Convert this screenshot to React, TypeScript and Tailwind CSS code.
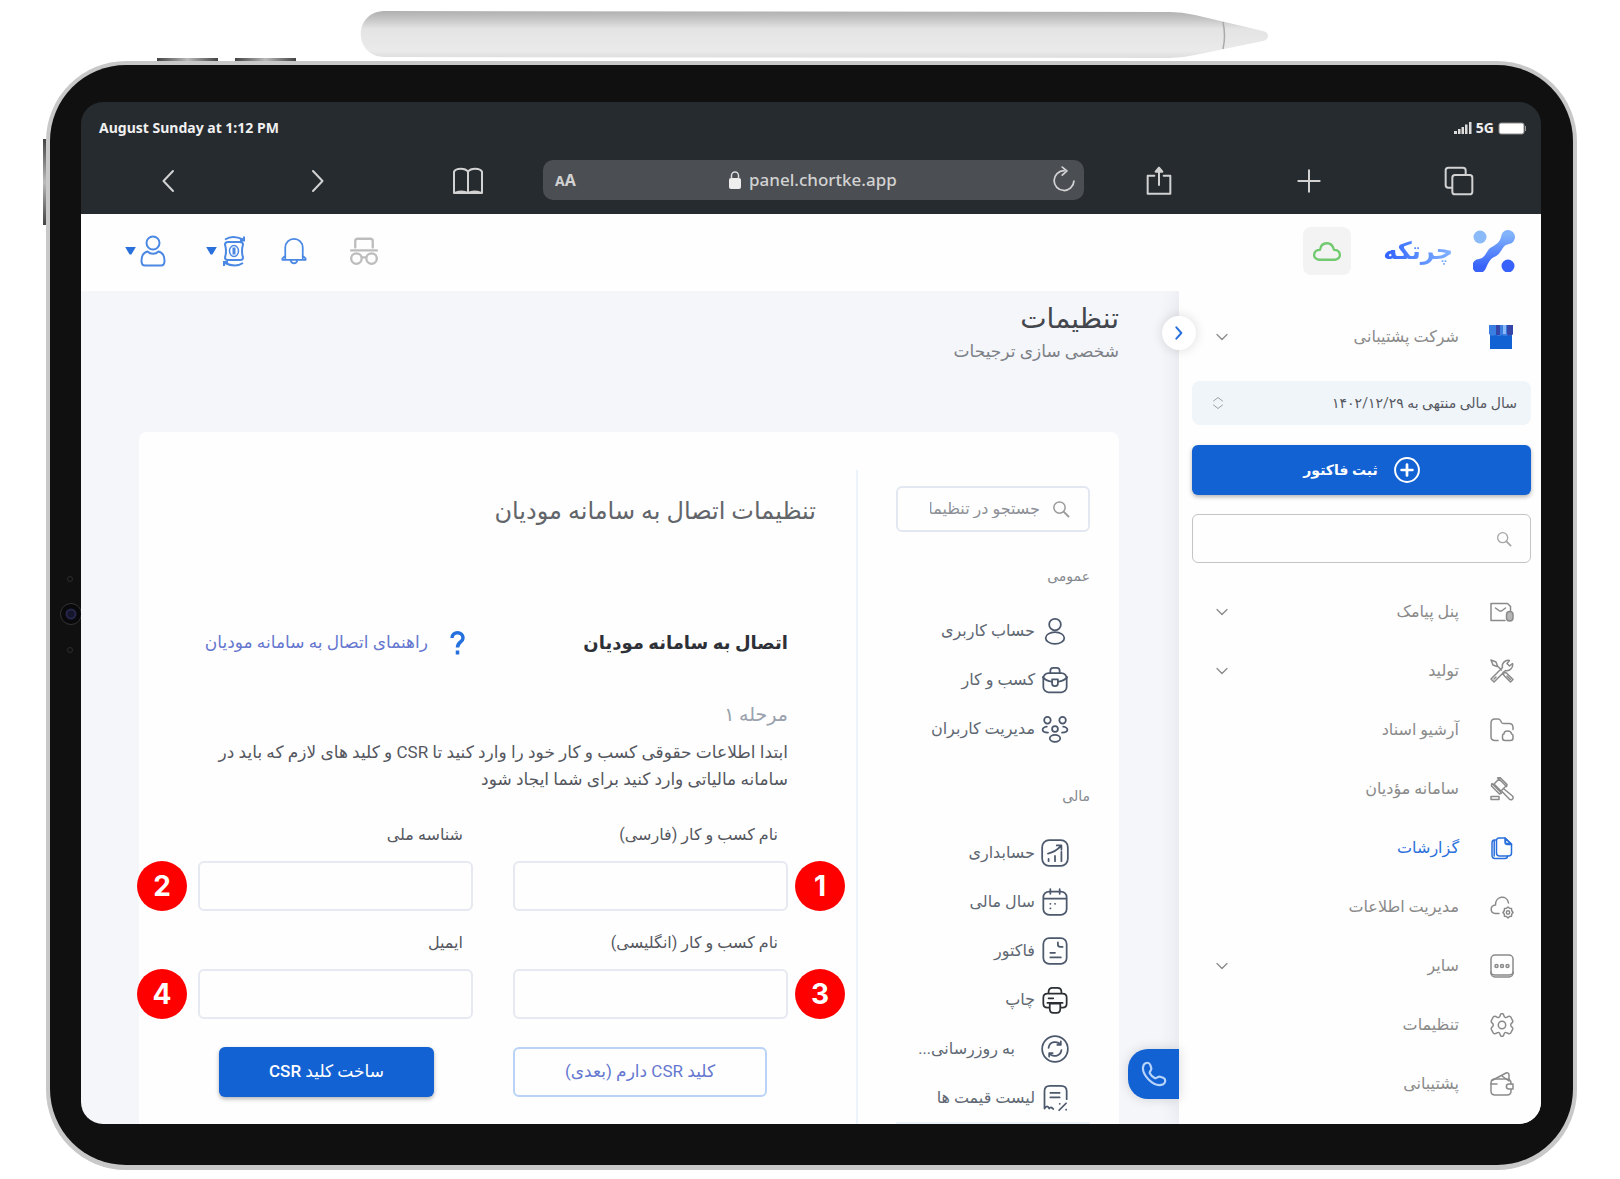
import type { ReactNode } from "react";

type IconProps = { className?: string; children?: ReactNode };

function Icon({ className = "size-6", children }: IconProps) {
  return (
    <svg viewBox="0 0 24 24" fill="none" stroke="currentColor" strokeWidth="1.5" strokeLinecap="round" strokeLinejoin="round" className={`shrink-0 ${className}`} aria-hidden="true">
      {children}
    </svg>
  );
}

function Chevron() {
  return <Icon className="mx-px size-3"><path d="M2 7l10 10L22 7" strokeWidth="2.500" /></Icon>;
}

function SearchIcon({ className }: { className?: string }) {
  return <Icon className={className}><circle cx="10" cy="10" r="7.500" strokeWidth="2" /><path d="M15.500 15.500L22 22" strokeWidth="2.500" /></Icon>;
}

const navItems = [
  {
    label: "پنل پیامک",
    expandable: true,
    icon: <><path d="M15 20.500H1V3.500H17.500l3 3v4" /><path d="M5.500 8l4 3h2l4-3" /><rect x="16.500" y="11.500" width="6.500" height="9.500" rx="3.200" fill="#b5b5b5" /></>,
  },
  {
    label: "تولید",
    expandable: true,
    icon: <><path d="M1 1l5 2 1.500 4 4 4M1 1l2 5 4 1.500M13.500 13l3 1L23 20.500 20.500 23 14 16.500l-1-3M1 20l11.500-11.500C11.500 4.500 15 0.500 19.500 1.500L17 4.500l2.500 2.500 3-2.500C23.500 9 19.500 12.500 15.500 11.500L4 23z" /><path d="M4 20l2-2M17 17l3.500 3.500" /></>,
  },
  {
    label: "آرشیو اسناد",
    icon: <><path d="M8 22.500H5c-2.500 0-4-1.500-4-4V5c0-2.500 1.500-4 4-4h3c1 0 2 .5 2.500 1.500l1 2c.4.700 1 1 2 1H19c2.500 0 4 1.500 4 4v2" /><path d="M12.500 18.500v-1c0-1 .6-1.500 1.500-1.500 0-4 7-4 7.500 0 1 .2 1.500.8 1.500 1.700v2.300c0 1.600-.9 2.500-2.500 2.500H15c-1.600 0-2.500-.9-2.500-2.500z" /></>,
  },
  {
    label: "سامانه مؤدیان",
    icon: <><path d="M9 2l7 7-5 5-7-7zM7.500 1L10 .500 17 7.500l-.5 2M1.500 8L2 6.500 11.500 16l-2 1-8-8z" /><path d="M14 12l8.500 7c1 1 .7 3-.5 3.500-1 .5-2 .3-2.700-.5L12 14.500M1 19.500h8v3H1zM1 22.500h8" /></>,
  },
  {
    label: "گزارشات",
    active: true,
    icon: <><path d="M9 2h6l6.500 6v9c0 1.800-1 3-3 3H9.500c-1.800 0-3-1-3-3V5c0-1.800.800-3 2.500-3z" /><path d="M15 2v4c0 1.500.8 2.500 2.500 2.500h4zM15.500 3v4.500h5" /><path d="M6 4H4.500C3 4 2 5 2 7v12c0 2 1 3.500 3 3.500h10c1.500 0 2.500-.800 2.500-2.500M4.200 5v15" /></>,
  },
  {
    label: "مدیریت اطلاعات",
    icon: <><path d="M9 18.500H5.500C-.5 18 0 10.500 5.500 10 5 1 17-1 18.500 8" /><path d="M18 12l1.500 1.300 2 .2.2 2L23 17.500l-1.300 1.700-.2 2-2 .300L18 23l-1.500-1.500-2-.3-.2-2L13 17.500l1.300-2 .2-2 2-.2z" /><circle cx="18" cy="17.500" r="1.700" /></>,
  },
  {
    label: "سایر",
    expandable: true,
    icon: <><rect x="1" y="1" width="22" height="22" rx="4" /><path d="M1 18c0 2 1.500 3 4 3h14c2.500 0 4-1 4-3" /><circle cx="6.500" cy="12" r="1.500" /><circle cx="12" cy="12" r="1.500" /><circle cx="17.500" cy="12" r="1.500" /></>,
  },
  {
    label: "تنظیمات",
    icon: <><path d="M10 2.800c.3-1.500.8-2.300 2-2.300s1.700.800 2 2.300c.4 1.700 1.500 2.200 3 1.300 1.500-1 2.500-1.300 3.500-.3s.9 1.900 1.900 3.400c.9 1.500.6 2-.7 3-1.300 1-1.300 2.600 0 3.600 1.300 1 1.600 1.500.7 3-1 1.500-.9 2.400-1.900 3.400s-2 .7-3.500-.3c-1.500-.9-2.600-.4-3 1.300-.3 1.500-.8 2.300-2 2.300s-1.700-.8-2-2.300c-.4-1.700-1.500-2.200-3-1.300-1.500 1-2.500 1.300-3.500.3s-.9-1.900-1.900-3.400c-.9-1.500-.6-2 .7-3 1.300-1 1.300-2.600 0-3.600-1.300-1-1.600-1.500-.7-3 1-1.500.9-2.400 1.900-3.400s2-.7 3.500.3c1.500.9 2.600.4 3-1.300z" /><circle cx="12" cy="12" r="3.700" /></>,
  },
  {
    label: "پشتیبانی",
    icon: <><path d="M1 11v8c0 2.500 1.200 4 4 4h12c2.800 0 4-1.500 4-4v-1.500M1 11c0-3 1.500-4 4-4h11c3 0 5 1 5 4v1" /><path d="M2 8.500L16 1c1.500-.7 3 .2 3 2v4M1 12h6M23 12v5h-4c-3.500 0-3.500-5 0-5zM12 4l7 5" /></>,
  },
];

const generalItems = [
  { label: "حساب کاربری", icon: <><circle cx="12" cy="6.500" r="5" /><ellipse cx="12" cy="18" rx="8" ry="5" /></> },
  { label: "کسب و کار", icon: <><rect x="2" y="6" width="20" height="16.500" rx="4.500" /><path d="M8 6V4c0-1.500.8-2.500 2.500-2.500h3C15.200 1.500 16 2.500 16 4v2M1.500 9.500c2 2.500 5 3.500 8 4M22.500 9.500c-2 2.500-5 3.500-8 4" /><path d="M9.500 11.500h5v3.500c0 3-5 3-5 0z" /></> },
  { label: "مدیریت کاربران", icon: <><circle cx="5.500" cy="4.500" r="2.800" /><circle cx="18.500" cy="4.500" r="2.800" /><circle cx="12" cy="12" r="2.500" /><ellipse cx="12" cy="20" rx="4.500" ry="3" /><path d="M5 10c-5 .5-5 5 1 5M19 10c5 .5 5 5-1 5" /></> },
];

const financeItems = [
  { label: "حسابداری", icon: <><rect x="1" y="1" width="22" height="22" rx="6" /><path d="M6.500 19v-2M12 19v-4.500M17.500 19v-8M6 12.500c4-.8 8-3 11.500-7M13.500 5.500h4v3.800" /></> },
  { label: "سال مالی", icon: <><rect x="2" y="3" width="20" height="20" rx="5" /><path d="M8 1v4M16 1v4M2.500 9h19M8 13.500h.1M8 17.500h.1M12 13.500h.1" /></> },
  { label: "فاکتور", icon: <><rect x="2" y="1" width="20" height="22" rx="5" /><path d="M14.500 4.500v2c0 1.200.8 2 2 2h2M8 13.500h4M8 17.500h9" /></> },
  { label: "چاپ", dark: true, icon: <><path d="M6.500 6.500V5c0-2.500 1-3.500 3.500-3.500h4c2.500 0 3.500 1 3.500 3.500v1.500zM7 18.500H5.500c-2 0-3.500-1.300-3.500-3.500v-5c0-2.200 1.300-3.500 3.500-3.500h13c2.200 0 3.500 1.300 3.500 3.500v5c0 2.200-1.300 3.500-3.500 3.500H17M5.500 14.500h13" /><path d="M7.500 15v4.500c0 2 1 3.500 3 3.500h3c2 0 3-1.500 3-3.500V15zM6.500 10.500h4" /></> },
  { label: "به روزرسانی...", wide: true, icon: <><circle cx="12" cy="12" r="11" /><path d="M6.500 11c.8-5.500 7.500-6.500 10.500-2.500M17 5.500v3h-3M17.500 13c-.8 5.500-7.500 6.500-10.500 2.500M7 18.500v-3h3" /></> },
  { label: "لیست قیمت ها", icon: <><path d="M3 21V6c0-3 1.500-4.500 4.500-4.500h9.500c3 0 5 1.500 5 4.500v7M3 21c1.500-2.500 3-2.500 4 0M7 21c1-1.500 2-1.500 3.500.5M8 7.500h8M8 11.500h8" /><path d="M15.500 22.500l6-6M16 17h.1M21.500 22h.1" /></> },
];

function SettingsList({ items }: { items: { label: string; icon: ReactNode; dark?: boolean; wide?: boolean }[] }) {
  return (
    <ul className="pr-[21px]">
      {items.map((item) => (
        <li key={item.label}>
          <a href="#" className={`flex h-[49px] items-center text-base text-[#5f6873] ${item.wide ? "gap-[26px]" : "gap-1.5"}`}>
            <Icon className={item.dark ? "size-7 text-[#2b2f33]" : "size-7 text-[#4c586c]"}>{item.icon}</Icon>
            <span className="whitespace-nowrap">{item.label}</span>
          </a>
        </li>
      ))}
    </ul>
  );
}

function Pencil() {
  return (
    <svg viewBox="0 0 908 49" className="ml-[360px] mt-2.5 h-[49px] w-[908px]" aria-hidden="true">
      <defs>
        <linearGradient id="body" x1="0" y1="0" x2="0" y2="1">
          <stop offset="0" stopColor="#b0b0b0" />
          <stop offset="0.15" stopColor="#c2c2c2" />
          <stop offset="0.38" stopColor="#e4e4e4" />
          <stop offset="0.85" stopColor="#eaeaea" />
          <stop offset="1" stopColor="#dedede" />
        </linearGradient>
      </defs>
      <path d="M24 1L810 2Q822 2 835 5L903 21Q908 22 908 26T903 31L835 45Q822 48 810 48L24 47C-7 46-7 2 24 1z" fill="url(#body)" />
      <path d="M863 12q3 14 0 27" fill="none" stroke="#aaa" strokeWidth="1.500" />
    </svg>
  );
}

function BrowserBar() {
  return (
    <div dir="ltr" className="bg-[#262b2f] font-['Noto_Sans',sans-serif] text-white">
      <div className="flex h-[52px] items-center justify-between pl-[18px] pr-3.5 text-sm font-bold text-[#f0f0f0]">
        <span>August Sunday at 1:12 PM</span>
        <span className="flex items-center gap-1">
          <svg viewBox="0 0 18 12" className="h-3 w-[18px]" fill="#dcdcdc" aria-hidden="true">
            <path d="M0 9h3v3H0zM4 7h2.500v5H4zM7.500 5H10v7H7.500zM11 2.500h2.500V12H11zM15 0h2.500v12H15z" />
          </svg>
          5G
          <svg viewBox="0 0 29 13" className="h-[13px] w-[29px]" aria-hidden="true">
            <rect x="1" y="1" width="25" height="11" rx="2" fill="#fff" stroke="#888" />
            <path d="M27.500 4v5" stroke="#999" />
          </svg>
        </span>
      </div>
      <div className="flex h-[60px] items-start pl-3 pr-[7px] text-[#d2d2d2]">
        <button type="button" aria-label="Back" className="grid h-[54px] w-[150px] place-items-center"><Icon className="size-6"><path d="M17 2L7.500 12 17 22" strokeWidth="2" /></Icon></button>
        <button type="button" aria-label="Forward" className="grid h-[54px] w-[150px] place-items-center"><Icon className="size-6"><path d="M7 2l9.500 10L7 22" strokeWidth="2" /></Icon></button>
        <button type="button" aria-label="Bookmarks" className="grid h-[54px] w-[150px] place-items-center">
          <Icon className="size-8"><path d="M12 5v16M12 5C10 2 3 2 1.500 5v16h21V5C21 2 14 2 12 5M2 21c4-1.500 8-1 10 0 2-1 6-1.500 10 0" /></Icon>
        </button>
        <div className="mt-1.5 flex h-10 min-w-0 flex-1 items-center rounded-[10px] bg-[#4b4e53] pl-3 pr-1.5">
          <button type="button" className="text-base font-bold"><span className="text-sm">A</span>A</button>
          <span className="flex flex-1 items-center justify-center gap-2">
            <svg viewBox="0 0 12 18" className="h-[18px] w-3" aria-hidden="true"><rect y="7" width="12" height="11" rx="2" fill="#eee" /><path d="M2.500 8V4.500a3.500 3.500 0 0 1 7 0V8" fill="none" stroke="#ddd" strokeWidth="1.500" /></svg>
            <span className="text-[17px] font-medium">panel.chortke.app</span>
          </span>
          <button type="button" aria-label="Reload" className="grid size-7 place-items-center"><Icon className="size-7"><path d="M12 4a8.500 8.500 0 1 0 8.500 9M10.500 1l4 3.200-4 3.600" /></Icon></button>
        </div>
        <button type="button" aria-label="Share" className="grid h-[54px] w-[150px] place-items-center"><Icon className="size-8"><path d="M8.500 8H3.500v13.500h17V8h-5M12 15V2.500M9.500 5L12 2l2.500 3z" /></Icon></button>
        <button type="button" aria-label="New tab" className="grid h-[54px] w-[150px] place-items-center"><Icon className="size-8"><path d="M12 4v16M4 12h16" /></Icon></button>
        <button type="button" aria-label="Tabs" className="grid h-[54px] w-[150px] place-items-center"><Icon className="size-8"><rect x="7" y="7.500" width="15" height="14.500" rx="2" /><path d="M6.500 17H4a2 2 0 0 1-2-2V4a2 2 0 0 1 2-2h11a2 2 0 0 1 2 2v3" /></Icon></button>
      </div>
    </div>
  );
}

function Caret() {
  return <svg viewBox="0 0 12 9" className="h-2 w-[11px]" fill="#2a70dc" aria-hidden="true"><path d="M0 0h12L7 8.500H5z" /></svg>;
}

function AppHeader() {
  return (
    <header dir="ltr" className="relative z-20 flex h-[77px] items-center justify-between bg-[#fefefe] pb-1 pl-11 pr-[26px] text-[#4a88e4]">
      <div className="flex items-center">
        <button type="button" aria-label="Account" className="flex items-center gap-1">
          <Caret />
          <svg viewBox="0 0 26 32" className="h-8 w-[26px]" fill="none" stroke="currentColor" strokeWidth="2" aria-hidden="true"><circle cx="13" cy="8" r="6.500" /><path d="M7.500 16.500C3 17.500 1.500 21 1.500 26c0 3 1 4.500 3.500 4.500h16c2.500 0 3.500-1.500 3.500-4.500 0-5-1.500-8.500-6-9.500-3 3-8 3-11 0z" /></svg>
        </button>
        <button type="button" aria-label="Currency" className="ml-10 flex items-center gap-1.5">
          <Caret />
          <svg viewBox="0 0 22 32" className="h-8 w-[22px]" fill="none" stroke="currentColor" strokeWidth="2" aria-hidden="true"><path d="M5 7h12c1.500 0 3 1 3 2.500-1.500 5-1.500 8 0 13 0 1.500-1.500 2.500-3 2.500H5c-1.500 0-3-1-3-2.500 1.500-5 1.500-8 0-13C2 8 3.500 7 5 7zM2 4.500c6-4 12-3 18 0M21 1.500v4h-4M20 28c-6 4-12 3-18 0M1 31v-4h4" /><ellipse cx="11" cy="16" rx="4.500" ry="5.500" strokeWidth="1.500" /><path d="M11 12.500v7" strokeWidth="3" /></svg>
        </button>
        <button type="button" aria-label="Notifications" className="ml-[35px]">
          <Icon className="size-7"><path d="M4.500 18.500V9a7.500 7.500 0 0 1 15 0v9.500M4.500 16L2 18.500v1h20v-1L19.500 16M9 20c1 3.500 5 3.500 6 0" /></Icon>
        </button>
        <button type="button" aria-label="Incognito" className="ml-[42px] text-[#bdbdbd]">
          <Icon className="size-7"><path d="M4.500 9V3.500a2 2 0 0 1 2-2h11a2 2 0 0 1 2 2V9M1 11.500h22M10.500 17.500h3" strokeWidth="2" /><circle cx="5.500" cy="18.500" r="4.500" strokeWidth="2" /><circle cx="18.500" cy="18.500" r="4.500" strokeWidth="2" /></Icon>
        </button>
      </div>
      <div className="flex items-center">
        <button type="button" aria-label="Sync" className="grid size-12 place-items-center rounded-lg bg-[#f3f3f3] text-[#72ca70]">
          <Icon className="size-7"><path d="M5 19.500C-1 18.500 0 11 6 11c1-7 10-8 12 0 6 0 7 7.500 1 8.500z" strokeWidth="2" /></Icon>
        </button>
        <span dir="rtl" className="ml-8 bg-linear-to-l from-[#84b2ff] to-[#315fff] bg-clip-text font-['DejaVu_Sans',sans-serif] text-2xl font-bold leading-[48px] text-transparent">چرتکه</span>
        <svg viewBox="0 0 42 42" className="ml-5 size-[42px]" aria-hidden="true">
          <defs>
            <linearGradient id="mark" x1="0" y1="1" x2="0" y2="0"><stop offset="0.15" stopColor="#3763fb" /><stop offset="0.9" stopColor="#82b4fb" /></linearGradient>
          </defs>
          <path d="M13 38a7 7 0 1 1-7-9c5-1 6-4 8-7 2-4 5-5 8-7 3-2 5-4 6-8a7 7 0 1 1 8 7c-5 1-6 4-8 7-2 3-4 5-7 6-4 2-6 6-8 11z" fill="url(#mark)" />
          <circle cx="7" cy="7" r="6.500" fill="#8bbaf8" />
          <circle cx="35" cy="36" r="6.500" fill="#3763fb" />
        </svg>
      </div>
    </header>
  );
}

function Sidebar() {
  return (
    <aside className="relative z-10 w-[362px] shrink-0 bg-[#fefefe] pb-[11px] pl-[13px] pr-2.5 pt-[23px] shadow-[-4px_0_16px_rgba(60,60,80,0.08)]">
      <button type="button" aria-label="Collapse menu" className="absolute -left-[17px] top-[25px] grid size-[34px] place-items-center rounded-full bg-white text-[#2a70dc] shadow-[0_0_12px_rgba(0,0,0,0.14)]">
        <Icon className="size-4"><path d="M8 3.500l7.500 8.500L8 20.500" strokeWidth="3" /></Icon>
      </button>
      <button type="button" className="flex h-[46px] w-full items-center pl-[23px] pr-[18px] text-base text-[#8a8a8a]">
        <svg viewBox="0 0 24 24" className="size-6" aria-hidden="true"><path d="M1 8h22v16H1z" fill="#1262d4" /><path d="M0 0h24v9q-2 3-5 1-3 2-6 0-3 2-6 0-5 2-7-1z" fill="#3b7ee2" /><path d="M7 0h4v10H7zM18 0h6v9q-3 3-6 0z" fill="#3646a8" /><path d="M14 0h3v9h-3z" fill="#8ab8f8" /></svg>
        <span className="mr-[30px] flex-1 text-right">شرکت پشتیبانی</span>
        <Chevron />
      </button>
      <button type="button" className="mt-[21px] flex h-11 w-full items-center justify-between rounded-lg bg-[#f0f5f9] pl-5 pr-[14px] text-sm text-[#55575f]">
        <span>سال مالی منتهی به ۱۴۰۲/۱۲/۲۹</span>
        <Icon className="h-[18px] w-3 text-[#98a0a6]"><path d="M3 8l9-7 9 7M3 16l9 7 9-7" strokeWidth="2" /></Icon>
      </button>
      <button type="button" className="mt-5 flex h-[50px] w-full items-center justify-center gap-4 rounded-md bg-[#1262d4] text-sm font-bold text-white shadow-[0_2px_4px_rgba(0,0,0,0.3)]">
        <Icon className="size-[26px]"><circle cx="12" cy="12" r="11" strokeWidth="1.800" /><path d="M12 7v10M7 12h10" strokeWidth="2.500" /></Icon>
        ثبت فاکتور
      </button>
      <div className="mt-[19px] flex h-[49px] items-center gap-2 rounded-md border border-[#c4c4c4] px-[18px] text-[#a5a5a5]">
        <SearchIcon className="size-4" />
        <input type="text" aria-label="جستجو" className="min-w-0 flex-1 outline-none" />
      </div>
      <nav className="mt-[19px]">
        {navItems.map((item) => (
          <a key={item.label} href="#" className={`flex h-[59px] items-center pl-[23px] pr-[17px] text-base ${item.active ? "text-[#2a70dc]" : "text-[#8a8a8a]"}`}>
            <Icon>{item.icon}</Icon>
            <span className="mr-[31px] flex-1 whitespace-nowrap">{item.label}</span>
            {item.expandable && <Chevron />}
          </a>
        ))}
      </nav>
    </aside>
  );
}

function Badge({ n, side }: { n: number; side: "left" | "right" }) {
  return (
    <span className={`absolute bottom-0 grid size-[50px] place-items-center rounded-full bg-[#fe0000] font-['Inter',sans-serif] text-[28px] font-bold text-white ${side === "right" ? "-right-[57px]" : "-left-[61px]"}`}>{n}</span>
  );
}

const fields = [
  { id: "name-fa", label: "نام کسب و کار (فارسی)", n: 1 },
  { id: "national-id", label: "شناسه ملی", n: 2 },
  { id: "name-en", label: "نام کسب و کار (انگلیسی)", n: 3 },
  { id: "email", label: "ایمیل", n: 4 },
];

function ConnectionForm() {
  return (
    <form className="min-w-0 flex-1 pt-[25px]">
      <h2 className="pr-10 text-2xl leading-8 text-[#62656a]">تنظیمات اتصال به سامانه مودیان</h2>
      <div className="pl-[59px] pr-[68px]">
        <div className="mt-[100px] grid grid-cols-2 items-center gap-x-10">
          <h3 className="whitespace-nowrap text-lg font-bold leading-8 text-[#2d3036]">اتصال به سامانه مودیان</h3>
          <a href="#" className="flex items-center gap-[22px] pr-2 text-[17px] text-[#6577cf]">
            <svg viewBox="0 0 15 24" className="h-6 w-[15px] shrink-0" fill="none" stroke="#2470dc" strokeWidth="3.500" aria-hidden="true"><path d="M2 7c0-7 11-7 11 0 0 4-5.500 4-5.500 9.500M7.500 19.500v4" /></svg>
            <span className="whitespace-nowrap">راهنمای اتصال به سامانه مودیان</span>
          </a>
        </div>
        <p className="mt-[42px] text-[19px] leading-7 text-[#9aa1ad]">مرحله ۱</p>
        <p className="mt-2.5 whitespace-nowrap text-[17px] leading-[27px] text-[#55575f]">
          ابتدا اطلاعات حقوقی کسب و کار خود را وارد کنید تا CSR و کلید های لازم که باید در
          <br />
          سامانه مالیاتی وارد کنید برای شما ایجاد شود
        </p>
        <div className="mt-[30px] grid grid-cols-2 gap-x-10 gap-y-5">
          {fields.map((field) => (
            <div key={field.id} className="relative">
              <label htmlFor={field.id} className="block pr-2.5 text-base leading-6 text-[#55575f]">{field.label}</label>
              <input id={field.id} className="mt-3.5 block h-[50px] w-full rounded-md border-2 border-[#e6e9f1] px-3 outline-none" />
              <Badge n={field.n} side={field.n % 2 ? "right" : "left"} />
            </div>
          ))}
        </div>
        <div className="mt-7 grid grid-cols-2 gap-x-10">
          <button type="button" className="mr-[21px] h-[50px] rounded-md border-2 border-[#b9d2f6] text-[17px] text-[#6577cf]">کلید CSR دارم (بعدی)</button>
          <button type="submit" className="ml-[21px] mr-[39px] h-[50px] rounded-md bg-[#1262d4] text-[17px] font-medium text-white shadow-[0_2px_4px_rgba(0,0,0,0.3)]">ساخت کلید CSR</button>
        </div>
      </div>
    </form>
  );
}

function SettingsPage() {
  return (
    <main className="relative z-20 flex min-w-0 flex-1 flex-col pl-[58px] pr-[60px] pt-2.5">
      <h1 className="text-[28px] leading-9 text-[#43464c]">تنظیمات</h1>
      <p className="text-[17px] leading-7 text-[#7d8087]">شخصی سازی ترجیحات</p>
      <div className="mt-[67px] flex flex-1 rounded-t-lg bg-[#fefefe] pt-[38px]">
        <div className="w-[263px] shrink-0 border-l-2 border-[#edf3fa] pl-[38px] pr-[29px] pt-4">
          <div className="flex h-[46px] items-center gap-3 rounded-md border-2 border-[#e2e7f1] pl-8 pr-[18px] text-[#9b9b9b]">
            <SearchIcon className="size-[18px]" />
            <input type="text" aria-label="جستجو در تنظیمات" placeholder="جستجو در تنظیمات" className="min-w-0 flex-1 text-base outline-none placeholder:text-[#8d9096]" />
          </div>
          <h2 className="mt-8 text-sm leading-6 text-[#85888e]">عمومی</h2>
          <div className="mt-[18px]"><SettingsList items={generalItems} /></div>
          <h2 className="mt-[31px] text-sm leading-6 text-[#85888e]">مالی</h2>
          <div className="mt-5 border-b-2 border-[#edf3fa]"><SettingsList items={financeItems} /></div>
        </div>
        <ConnectionForm />
      </div>
      <button type="button" aria-label="تماس" className="absolute bottom-[25px] right-0 grid h-[50px] w-[51px] place-items-center rounded-l-[20px] bg-[#1262d4] text-[#b9d4fb] shadow-[0_0_12px_rgba(0,0,0,0.15)]">
        <Icon className="size-[26px]"><path d="M2.500 3.500c2-2.500 5-2.500 6 0l1 3c.5 1.700-1.500 2.700-1.500 4.500 1 2 3 4 5 5 1.800 0 2.800-2 4.500-1.500l3 1c2.500 1 2.500 4 0 6C12 25-1 12 2.500 3.500z" strokeWidth="2" /></Icon>
      </button>
    </main>
  );
}

export default function App() {
  return (
    <div className="min-h-screen bg-white pb-[9px]">
      <div className="flow-root"><Pencil /></div>
      <div className="relative ml-[46px] mr-[43px] mt-0.5 rounded-[80px] bg-[#c9c8c8] pb-[5px] pl-1 pr-1 pt-1">
        <span className="absolute -top-[3px] left-[111px] h-[3px] w-[61px] bg-linear-to-r from-[#444] via-[#bbb] to-[#444]" />
        <span className="absolute -top-[3px] left-[189px] h-[3px] w-[61px] bg-linear-to-r from-[#444] via-[#bbb] to-[#444]" />
        <span className="absolute -left-[3px] top-[78px] h-[86px] w-[3px] bg-linear-to-b from-[#444] via-[#bbb] to-[#444]" />
        <div className="relative rounded-[76px] bg-[#101010] pb-[41px] pl-[31px] pr-8 pt-[37px]">
          <svg viewBox="0 0 24 84" className="absolute left-2.5 top-[506px] h-[84px] w-6" fill="none" aria-hidden="true">
            <circle cx="10" cy="8" r="2.500" stroke="#2c2c2c" />
            <circle cx="11" cy="43" r="10.500" fill="#09090b" stroke="#333" />
            <circle cx="11" cy="43" r="4.500" fill="#15152c" stroke="#26264a" strokeWidth="2" />
            <circle cx="10" cy="79" r="2.500" stroke="#2c2c2c" />
          </svg>
          <div className="relative overflow-hidden rounded-[22px]">
            <BrowserBar />
            <AppHeader />
            <div dir="rtl" lang="fa" className="flex bg-[#f4f6fa] font-['Roboto','DejaVu_Sans',sans-serif]">
              <Sidebar />
              <SettingsPage />
            </div>
          </div>
        </div>
      </div>
    </div>
  );
}
